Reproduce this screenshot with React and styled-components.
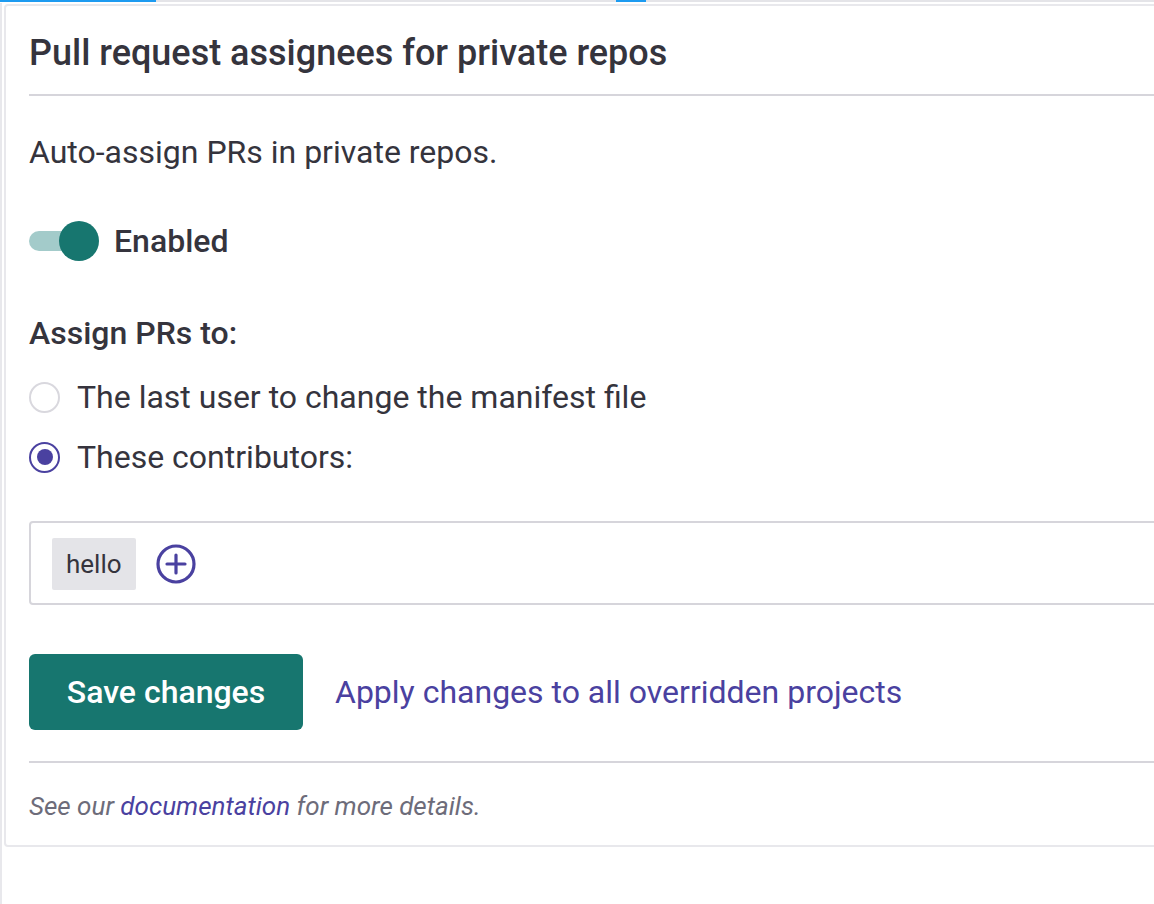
import React from "react";
import styled, { createGlobalStyle } from "styled-components";

const GlobalStyle = createGlobalStyle`
  html, body {
    margin: 0;
    padding: 0;
    background: #fff;
    overflow: hidden;
  }
  body {
    font-family: Roboto, "Liberation Sans", sans-serif;
    color: #35343d;
  }
`;

const Page = styled.div`
  width: 1154px;
  height: 904px;
  overflow: hidden;
`;

const TabLine = styled.div`
  position: relative;
  height: 2px;
  background: #e4e4e8;
`;

const TabMarker = styled.span`
  position: absolute;
  top: 0;
  height: 2px;
  background: #1d9bf0;
`;

const Body = styled.div`
  margin-top: 1px;
  padding-top: 1px;
  border-left: 2px solid #e8e8ec;
  height: 900px;
`;

const Card = styled.section`
  margin-left: 2px;
  width: 1200px;
  border: 2px solid #e8e8ec;
  border-radius: 4px;
  padding: 0 23px 23px;
  box-sizing: border-box;
`;

const Title = styled.h2`
  margin: 0;
  padding: 27px 0 21px;
  font-size: 36px;
  line-height: 40px;
  font-weight: 500;
  border-bottom: 2px solid #d6d5db;
`;

const Description = styled.p`
  margin: 37px 0 0;
  font-size: 32px;
  line-height: 38px;
`;

const ToggleRow = styled.label`
  display: flex;
  align-items: center;
  gap: 15px;
  margin-top: 50px;
  height: 40px;
`;

const Track = styled.span`
  position: relative;
  width: 70px;
  height: 40px;
  display: inline-block;

  &::before {
    content: "";
    position: absolute;
    left: 0;
    top: 10px;
    width: 60px;
    height: 20px;
    border-radius: 10px;
    background: #a3cbca;
  }
  &::after {
    content: "";
    position: absolute;
    right: 0;
    top: 0;
    width: 40px;
    height: 40px;
    border-radius: 50%;
    background: #17766f;
  }
`;

const ToggleLabel = styled.span`
  font-size: 32px;
  font-weight: 500;
`;

const SectionLabel = styled.div`
  margin-top: 53px;
  font-size: 32px;
  line-height: 38px;
  font-weight: 500;
`;

const RadioList = styled.div`
  display: flex;
  flex-direction: column;
  gap: 22px;
  margin-top: 26px;
`;

const RadioRow = styled.label`
  display: flex;
  align-items: center;
  gap: 17px;
  height: 38px;
  font-size: 32px;
`;

const RadioDot = styled.span`
  flex: none;
  width: 31px;
  height: 31px;
  border-radius: 50%;
  box-sizing: border-box;
  border: ${(p) => (p.checked ? "2.5px solid #4a41a0" : "2px solid #d9d8de")};
  display: flex;
  align-items: center;
  justify-content: center;

  &::after {
    content: "";
    width: 16px;
    height: 16px;
    border-radius: 50%;
    background: ${(p) => (p.checked ? "#4a41a0" : "transparent")};
  }
`;

const TagBox = styled.div`
  margin-top: 45px;
  border: 2px solid #d6d5db;
  border-radius: 4px;
  padding: 15px 21px 13px;
  display: flex;
  align-items: center;
  gap: 20px;
`;

const Chip = styled.span`
  height: 52px;
  padding: 0 14px;
  display: inline-flex;
  align-items: center;
  background: #e4e4e8;
  border-radius: 2px;
  font-size: 26px;
`;

const AddButton = styled.button`
  background: none;
  border: none;
  padding: 0;
  display: flex;
  color: #4a41a0;
  cursor: pointer;
`;

const Actions = styled.div`
  margin-top: 49px;
  display: flex;
  align-items: center;
  gap: 32px;
`;

const SaveButton = styled.button`
  width: 274px;
  height: 76px;
  border: none;
  border-radius: 6px;
  background: #17766f;
  color: #fff;
  font-family: Roboto, "Liberation Sans", sans-serif;
  font-size: 32px;
  font-weight: 500;
  cursor: pointer;
`;

const TextLink = styled.a`
  color: #4a41a0;
  text-decoration: none;
  font-size: ${(p) => p.size || "inherit"};
`;

const Footer = styled.p`
  margin: 31px 0 0;
  padding-top: 27px;
  border-top: 2px solid #d6d5db;
  font-size: 26px;
  line-height: 32px;
  font-style: italic;
  color: #6d6c7a;
`;

const PlusCircle = () => (
  <svg width="40" height="40" viewBox="0 0 40 40" fill="none" stroke="currentColor" strokeWidth="3.2" strokeLinecap="round">
    <circle cx="20" cy="20" r="18" />
    <path d="M20 11v18M11 20h18" />
  </svg>
);

export default function App() {
  return (
    <Page>
      <GlobalStyle />
      <TabLine>
        <TabMarker style={{ left: 0, width: 156 }} />
        <TabMarker style={{ left: 616, width: 30 }} />
      </TabLine>
      <Body>
        <Card>
          <Title>Pull request assignees for private repos</Title>
          <Description>Auto-assign PRs in private repos.</Description>
          <ToggleRow>
            <Track />
            <ToggleLabel>Enabled</ToggleLabel>
          </ToggleRow>
          <SectionLabel>Assign PRs to:</SectionLabel>
          <RadioList>
            <RadioRow>
              <RadioDot />
              The last user to change the manifest file
            </RadioRow>
            <RadioRow>
              <RadioDot checked />
              These contributors:
            </RadioRow>
          </RadioList>
          <TagBox>
            <Chip>hello</Chip>
            <AddButton aria-label="Add contributor">
              <PlusCircle />
            </AddButton>
          </TagBox>
          <Actions>
            <SaveButton>Save changes</SaveButton>
            <TextLink href="#" size="32px">Apply changes to all overridden projects</TextLink>
          </Actions>
          <Footer>
            See our <TextLink href="#">documentation</TextLink> for more details.
          </Footer>
        </Card>
      </Body>
    </Page>
  );
}
